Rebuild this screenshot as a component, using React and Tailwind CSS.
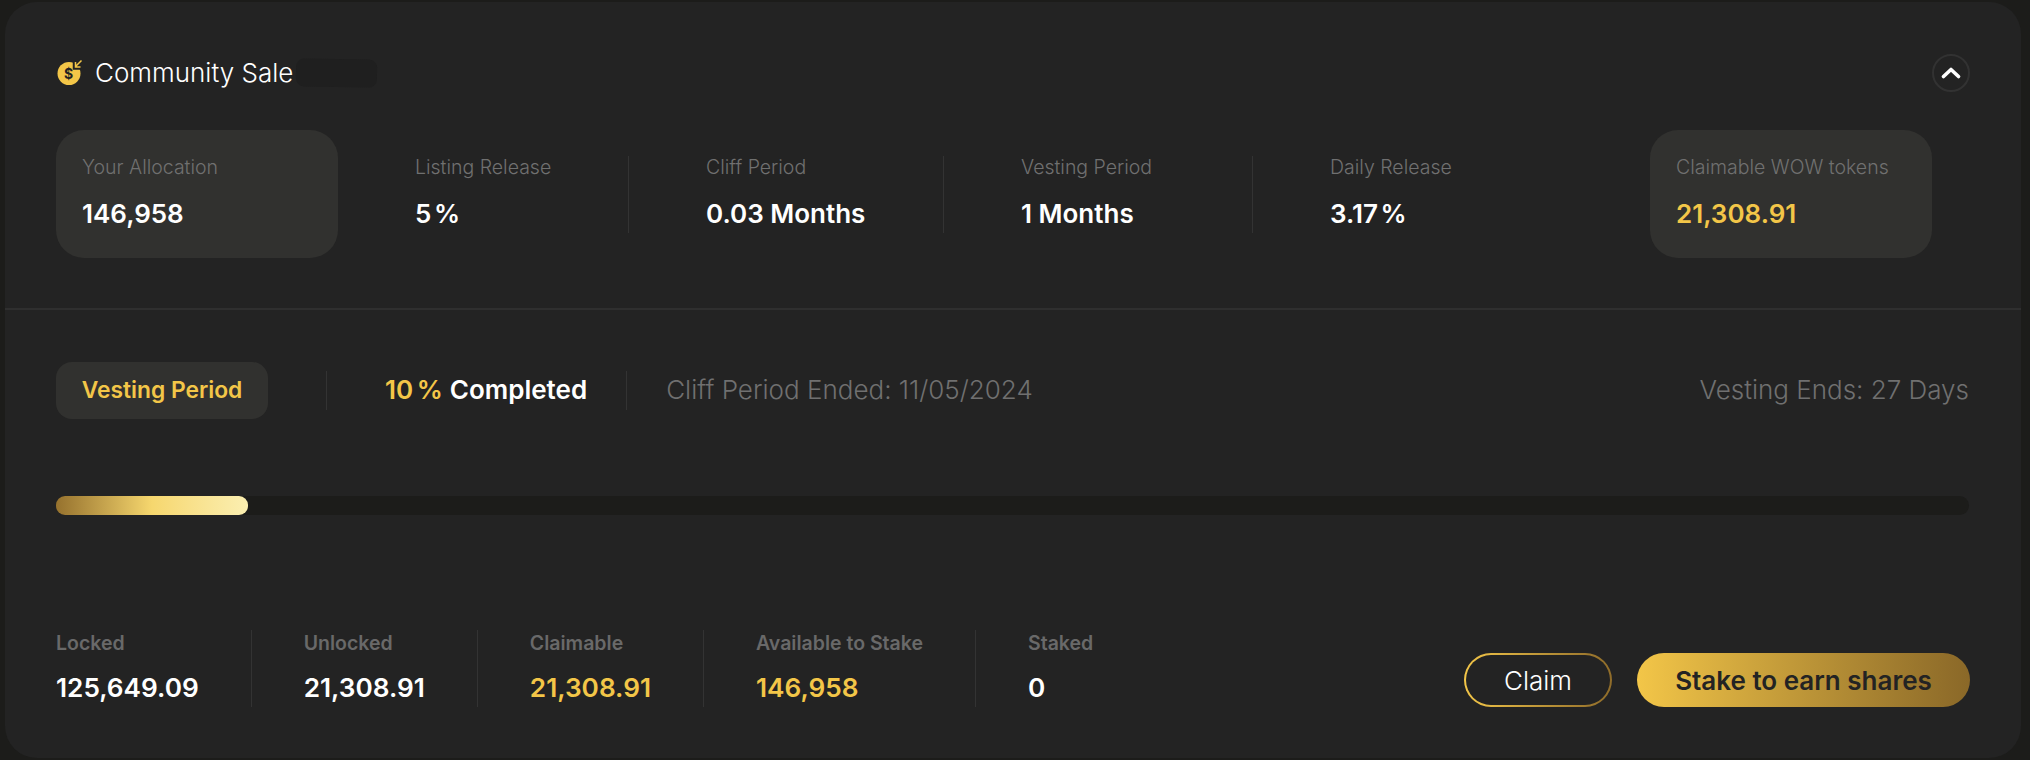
const Stat = ({ label, value, gold, className = "", valueClass = "" }) => (
  <div className={`flex flex-col ${className}`}>
    <span className="text-[19.5px] leading-[22px] font-light text-[#707070]">{label}</span>
    <span className={`mt-[21px] text-[26px] leading-[29px] font-semibold ${gold ? "text-[#f3c648]" : "text-white"} ${valueClass}`}>{value}</span>
  </div>
);

const Box = ({ className = "", ...p }) => (
  <div className={`h-[128px] rounded-[28px] bg-[#31312f] pt-[26px] shrink-0 ${className}`}>
    <Stat {...p} />
  </div>
);

const Bottom = ({ label, value, gold, className = "" }) => (
  <div className={`flex flex-col h-[77px] pt-[2px] ${className}`}>
    <span className="text-[19.5px] leading-[22px] font-semibold text-[#696969]">{label}</span>
    <span className={`mt-[18px] text-[26.2px] leading-[32px] font-semibold ${gold ? "text-[#f3c648]" : "text-white"}`}>{value}</span>
  </div>
);

const Coin = () => (
  <svg width="28" height="28" viewBox="0 0 28 28" className="shrink-0">
    <circle cx="13" cy="14.5" r="11.5" fill="#f3c648" />
    <path d="M19 8 L25 2 M19 3 V8.5 H24.5" fill="none" stroke="#232323" strokeWidth="4.5" />
    <path d="M19.5 7.5 L25.5 1.5 M19.5 3 V8 H24.5" fill="none" stroke="#f3c648" strokeWidth="1.5" />
    <text x="12.5" y="20" textAnchor="middle" fontSize="14" fontWeight="700" fontFamily="Inter" fill="#232323">$</text>
  </svg>
);

export default function App() {
  return (
    <div className="w-[2030px] h-[760px] bg-[#1c1c1a] pt-[2px] pl-[5px] pr-[9px] pb-[2px] font-[Inter,sans-serif]">
      <div className="h-[756px] rounded-[32px] bg-[#232323] flex flex-col">
        <div className="h-[308px] px-[51px] border-b-2 border-[#2f2f2f] shrink-0">
          <div className="h-[128px] flex items-start">
            <div className="flex items-center mt-[51px] h-[40px] w-full">
              <Coin />
              <span className="ml-[11px] text-[26px] leading-[40px] font-light text-white">Community Sale</span>
              <div className="ml-[3px] w-[81px] h-[28px] rounded-[8px] rotate-1 bg-[#1f1f1f]" />
              <button className="ml-auto w-[38px] h-[38px] rounded-full border-2 border-[#323232] flex items-center justify-center">
                <svg width="20" height="12" viewBox="0 0 20 12" fill="none">
                  <path d="M2.5 9.5 L10 2.5 L17.5 9.5" stroke="white" strokeWidth="3.6" strokeLinecap="round" strokeLinejoin="round" />
                </svg>
              </button>
            </div>
          </div>
          <div className="flex items-center h-[128px]">
            <Box label="Your Allocation" value="146,958" className="w-[282px] pl-[26px]" />
            <Stat label="Listing Release" value="5 %" valueClass="[word-spacing:-4px]" className="ml-[77px] w-[214px] h-[77px] border-r border-[#333333]" />
            <Stat label="Cliff Period" value="0.03 Months" className="pl-[77px] w-[315px] h-[77px] border-r border-[#333333]" />
            <Stat label="Vesting Period" value="1 Months" className="pl-[77px] w-[309px] h-[77px] border-r border-[#333333]" />
            <Stat label="Daily Release" value="3.17 %" valueClass="[word-spacing:-4px]" className="pl-[77px] h-[77px]" />
            <Box label="Claimable WOW tokens" value="21,308.91" gold className="ml-auto mr-[38px] w-[282px] pl-[26px]" />
          </div>
        </div>

        <div className="px-[51px] flex-1 flex flex-col">
          <div className="flex items-center mt-[52px] h-[57px]">
            <div className="w-[212px] h-[57px] rounded-[16px] bg-[#31312f] flex items-center justify-center text-[22.8px] font-semibold text-[#f3c648]">Vesting Period</div>
            <div className="ml-[58px] h-[39px] border-l border-[#333333]" />
            <span className="ml-[58px] -mt-[2px] text-[26px] font-semibold text-[#f3c648] [word-spacing:-3px]">10 %</span>
            <span className="ml-[7px] -mt-[2px] text-[26px] font-semibold text-white">Completed</span>
            <div className="ml-[39px] h-[39px] border-l border-[#333333]" />
            <span className="ml-[39px] -mt-[2px] text-[26px] font-light text-[#707070]">Cliff Period Ended: 11/05/2024</span>
            <span className="ml-auto mr-[1px] -mt-[2px] text-[26px] font-light text-[#707070]">Vesting Ends: 27 Days</span>
          </div>

          <div className="mt-[77px] mr-[1px] h-[19px] rounded-full bg-[#1c1c1a]">
            <div className="w-[192px] h-[19px] rounded-[9px] bg-linear-to-r from-[#96722e] via-[#f6d76e] to-[#fbefb1]" />
          </div>

          <div className="flex items-end justify-between mt-[115px]">
            <div className="flex">
              <Bottom label="Locked" value="125,649.09" className="pr-[52px] border-r border-[#333333]" />
              <Bottom label="Unlocked" value="21,308.91" className="px-[52px] border-r border-[#333333]" />
              <Bottom label="Claimable" value="21,308.91" gold className="px-[52px] border-r border-[#333333]" />
              <Bottom label="Available to Stake" value="146,958" gold className="px-[52px] border-r border-[#333333]" />
              <Bottom label="Staked" value="0" className="pl-[52px]" />
            </div>
            <div className="flex gap-[25px]">
              <div className="w-[148px] h-[54px] rounded-full p-[2px] bg-linear-to-r from-[#f3c648] to-[#8f6c2a]">
                <div className="w-full h-full rounded-full bg-[#232323] flex items-center justify-center text-[26px] font-light text-white">Claim</div>
              </div>
              <div className="w-[333px] h-[54px] rounded-full bg-linear-to-r from-[#f3c648] to-[#8a6828] flex items-center justify-center text-[26px] font-semibold text-[#232323]">Stake to earn shares</div>
            </div>
          </div>
        </div>
      </div>
    </div>
  );
}
